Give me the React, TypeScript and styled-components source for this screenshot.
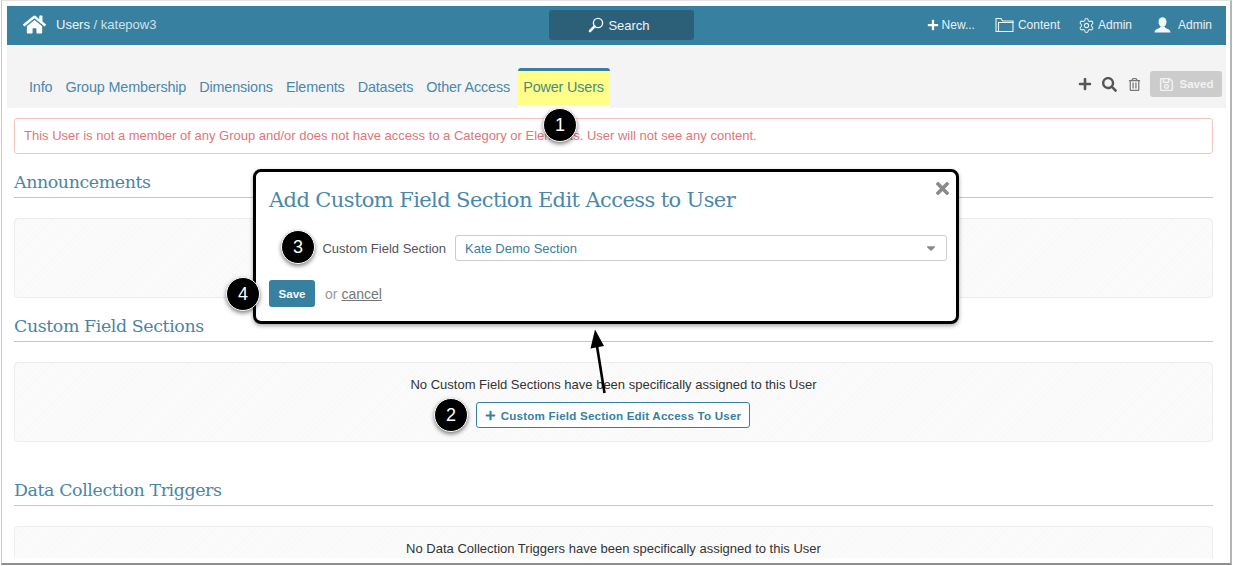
import React from "react";
import styled, { createGlobalStyle } from "styled-components";
import { FaPlus, FaSearch, FaRegSave, FaHome, FaTimes, FaRegTrashAlt, FaCaretDown } from "react-icons/fa";
import { Settings } from "lucide-react";

const Global = createGlobalStyle`
  html, body { margin: 0; padding: 0; background: #fff; }
  body { font-family: "Liberation Sans", Arial, sans-serif; }
  * { box-sizing: border-box; }
`;

const Stage = styled.div`
  position: relative;
  width: 1233px;
  height: 566px;
  overflow: hidden;
  background: #fff;
`;
const Frame = styled.div`
  width: 1231px;
  height: 565px;
  margin-left: 1px;
  border: 1px solid #c9c9c9;
  border-top-color: #e4e4e4;
  border-bottom: 2px solid #8f8f8f;
  border-right: 2px solid #b5b5b5;
  padding: 5px 4px 5px 5px;
  background: #fff;
`;
const Viewport = styled.div`
  height: 100%;
  overflow: hidden;
`;
const Header = styled.header`
  height: 39px;
  background: #37809f;
  display: grid;
  grid-template-columns: 542px 145px 1fr;
  align-items: center;
  color: #fff;
`;
const HeaderLeft = styled.div`
  display: flex;
  align-items: center;
  padding-left: 16px;
  gap: 10px;
  font-size: 13px;
  margin-top: -3px;
`;
const Crumb = styled.span`
  color: #f0f5f7;
  & > span { color: #cfe0e8; }
`;
const SearchBox = styled.div`
  height: 30px;
  margin-top: -1px;
  padding-right: 5px;
  background: #2c6078;
  border-radius: 3px;
  display: flex;
  align-items: center;
  justify-content: center;
  gap: 4px;
  font-size: 13px;
  color: #eef4f7;
`;
const HeaderRight = styled.nav`
  display: flex;
  justify-content: flex-end;
  align-items: center;
  font-size: 12px;
  color: #e8f0f4;
  padding-right: 14px;
  margin-top: -1px;
`;
const NavItem = styled.span<{ $gap: number; $ml: number }>`
  display: inline-flex;
  align-items: center;
  gap: ${(p) => p.$gap}px;
  margin-left: ${(p) => p.$ml}px;
`;
const SubBar = styled.div`
  height: 63px;
  background: #f4f4f4;
  display: flex;
  justify-content: space-between;
  align-items: flex-end;
  padding: 0 4px 0 15.5px;
`;
const Tabs = styled.div`
  display: flex;
  align-items: flex-end;
`;
const Tab = styled.span<{ $active?: boolean }>`
  height: 40px;
  display: flex;
  align-items: center;
  font-size: 14.4px;
  letter-spacing: -0.15px;
  padding: 0 6.5px 2px 6.5px;
  color: #4a88ad;
  ${(p) =>
    p.$active &&
    `
    width: 92px;
    margin-left: 1px;
    justify-content: center;
    color: #4a8a80;
    background: linear-gradient(#ffff88 0 34px, #fff 34px);
    border-top: 3px solid #37809f;
    border-radius: 3px 3px 0 0;
    padding: 0 0 5px;
  `}
`;
const Tools = styled.div`
  display: flex;
  align-items: center;
  height: 26px;
  margin-bottom: 11px;
  color: #555;
`;
const ToolSlot = styled.span<{ $w: number; $c?: string }>`
  width: ${(p) => p.$w}px;
  display: flex;
  justify-content: center;
  color: ${(p) => p.$c || "#555"};
`;
const SavedBtn = styled.span`
  width: 72px;
  height: 26px;
  margin-left: 3px;
  background: #ccc;
  border-radius: 3px;
  color: #f2f2f2;
  font-size: 11.5px;
  font-weight: 700;
  display: flex;
  align-items: center;
  justify-content: center;
  gap: 6px;
`;
const Content = styled.main`
  padding: 10px 13px 0 7px;
`;
const Alert = styled.div`
  height: 36px;
  border: 1px solid #f5c4c2;
  border-radius: 3px;
  color: #e0767a;
  font-size: 13px;
  display: flex;
  align-items: center;
  padding: 0 9px 1px;
`;
const Section = styled.section<{ $top: number }>`
  margin-top: ${(p) => p.$top}px;
`;
const SectionTitle = styled.h2`
  margin: 0;
  height: 28px;
  line-height: 24px;
  font-family: "DejaVu Serif", serif;
  font-weight: 400;
  font-size: 17.4px;
  letter-spacing: -0.4px;
  color: #4a85a5;
  border-bottom: 1px solid #b9cdd6;
`;
const Panel = styled.div`
  margin-top: 20px;
  height: 80px;
  border: 1px solid #ececec;
  border-radius: 4px;
  background: repeating-linear-gradient(135deg, #fbfbfb 0 2px, #f9f9f9 2px 4px);
  display: flex;
  flex-direction: column;
  align-items: center;
  padding-top: 14px;
  gap: 10px;
  font-size: 13px;
  line-height: 15px;
  color: #333;
`;
const AddBtn = styled.button`
  height: 26px;
  width: 274px;
  margin-right: 1px;
  border: 1px solid #37809f;
  border-radius: 3px;
  background: #fff;
  color: #37809f;
  font: 700 11.6px "Liberation Sans", Arial, sans-serif;
  letter-spacing: 0.2px;
  display: flex;
  align-items: center;
  justify-content: center;
  gap: 5px;
  padding: 0;
`;
const Modal = styled.div`
  position: absolute;
  left: 253px;
  top: 169px;
  width: 706px;
  height: 155px;
  background: #fff;
  border: 3px solid #000;
  border-radius: 8px;
  box-shadow: 0 2px 4px rgba(0, 0, 0, 0.35);
  padding: 0 9px 0 13px;
`;
const ModalTitle = styled.h3`
  margin: 0;
  padding-top: 14px;
  height: 63px;
  font-family: "DejaVu Serif", serif;
  font-weight: 400;
  font-size: 21px;
  line-height: 28px;
  letter-spacing: -0.6px;
  color: #4a88a8;
`;
const Close = styled.span`
  position: absolute;
  right: 4px;
  top: 7px;
  color: #8a8a8a;
  display: flex;
`;
const FieldRow = styled.div`
  display: grid;
  grid-template-columns: 177px 1fr;
  column-gap: 9px;
  align-items: center;
`;
const FieldLabel = styled.label`
  text-align: right;
  font-size: 13px;
  color: #555;
`;
const SelectBox = styled.div`
  height: 26px;
  border: 1px solid #ccc;
  border-radius: 3px;
  display: flex;
  align-items: center;
  justify-content: space-between;
  padding: 0 8px 0 9px;
  font-size: 13px;
  color: #37809f;
`;
const Actions = styled.div`
  display: flex;
  align-items: center;
  margin-top: 19px;
  font-size: 14px;
  color: #999;
`;
const SaveBtn = styled.button`
  width: 46px;
  height: 27px;
  border: 0;
  border-radius: 3px;
  background: #37809f;
  color: #f4f8fa;
  font: 700 11.6px "Liberation Sans", Arial, sans-serif;
  margin-right: 10px;
  padding: 0;
`;
const CancelLink = styled.a`
  margin-left: 4px;
  color: #777;
  text-decoration: underline;
`;
const Badge = styled.span<{ $x: number; $y: number }>`
  position: absolute;
  left: ${(p) => p.$x - 17}px;
  top: ${(p) => p.$y - 17}px;
  width: 34px;
  height: 34px;
  border-radius: 50%;
  background: #000;
  color: #fff;
  border: 1px solid #fff;
  box-shadow: 0 2px 4px rgba(0, 0, 0, 0.5);
  display: flex;
  align-items: center;
  justify-content: center;
  font-size: 18px;
`;
const ArrowSvg = styled.svg`
  position: absolute;
  left: 580px;
  top: 325px;
`;

const FolderIcon = () => (
  <svg width="19" height="16" viewBox="0 0 19 16" fill="none" stroke="#eef4f7" strokeWidth="1.1">
    <path d="M1 14.5V1.5h5l1.5 2.5h10.5v10.5z" />
    <path d="M3.5 14.5V5.5h15" />
  </svg>
);
const UserIcon = () => (
  <svg width="17" height="16" viewBox="0 0 17 16" fill="#f4f8fa">
    <ellipse cx="8.5" cy="5" rx="4" ry="4.8" />
    <path d="M0.5 15.5c0-3 3-3.6 5-4.6l1-1.4h4l1 1.4c2 1 5 1.6 5 4.6z" />
  </svg>
);
const ThinSearchIcon = () => (
  <svg width="16" height="16" viewBox="0 0 16 16" fill="none" stroke="#f4f8fa">
    <circle cx="10" cy="6" r="4.6" strokeWidth="1.4" />
    <path d="M6.6 9.4 L2 14" strokeWidth="2.6" strokeLinecap="round" />
  </svg>
);

export default function App() {
  return (
    <Stage>
      <Global />
      <Frame>
        <Viewport>
          <Header>
            <HeaderLeft>
              <FaHome size={23} color="#fff" />
              <Crumb>
                Users <span>/ katepow3</span>
              </Crumb>
            </HeaderLeft>
            <SearchBox>
              <ThinSearchIcon />
              Search
            </SearchBox>
            <HeaderRight>
              <NavItem $gap={3} $ml={0}>
                <FaPlus size={12} color="#fff" />
                New...
              </NavItem>
              <NavItem $gap={4} $ml={20}>
                <FolderIcon />
                Content
              </NavItem>
              <NavItem $gap={3} $ml={18}>
                <Settings size={17} strokeWidth={1.5} />
                Admin
              </NavItem>
              <NavItem $gap={7} $ml={22}>
                <UserIcon />
                Admin
              </NavItem>
            </HeaderRight>
          </Header>
          <SubBar>
            <Tabs>
              <Tab>Info</Tab>
              <Tab>Group Membership</Tab>
              <Tab>Dimensions</Tab>
              <Tab>Elements</Tab>
              <Tab>Datasets</Tab>
              <Tab>Other Access</Tab>
              <Tab $active>Power Users</Tab>
            </Tabs>
            <Tools>
              <ToolSlot $w={24}>
                <FaPlus size={14} />
              </ToolSlot>
              <ToolSlot $w={24}>
                <FaSearch size={15} />
              </ToolSlot>
              <ToolSlot $w={26} $c="#777">
                <FaRegTrashAlt size={13} />
              </ToolSlot>
              <SavedBtn>
                <FaRegSave size={15} />
                Saved
              </SavedBtn>
            </Tools>
          </SubBar>
          <Content>
            <Alert>
              This User is not a member of any Group and/or does not have access to a Category or Elements. User will not see any content.
            </Alert>
            <Section $top={16}>
              <SectionTitle>Announcements</SectionTitle>
              <Panel />
            </Section>
            <Section $top={16}>
              <SectionTitle>Custom Field Sections</SectionTitle>
              <Panel>
                No Custom Field Sections have been specifically assigned to this User
                <AddBtn>
                  <FaPlus size={11} />
                  Custom Field Section Edit Access To User
                </AddBtn>
              </Panel>
            </Section>
            <Section $top={36}>
              <SectionTitle>Data Collection Triggers</SectionTitle>
              <Panel>No Data Collection Triggers have been specifically assigned to this User</Panel>
            </Section>
          </Content>
        </Viewport>
      </Frame>
      <Modal>
        <ModalTitle>Add Custom Field Section Edit Access to User</ModalTitle>
        <Close>
          <FaTimes size={19} />
        </Close>
        <FieldRow>
          <FieldLabel>Custom Field Section</FieldLabel>
          <SelectBox>
            Kate Demo Section
            <FaCaretDown size={14} color="#8a8a8a" />
          </SelectBox>
        </FieldRow>
        <Actions>
          <SaveBtn>Save</SaveBtn>
          or <CancelLink>cancel</CancelLink>
        </Actions>
      </Modal>
      <ArrowSvg width="40" height="75" viewBox="0 0 40 75">
        <path d="M24.5 68 L16.5 18" stroke="#000" strokeWidth="2.6" fill="none" />
        <path d="M15 4.5 L10.5 23.5 L24 21 Z" fill="#000" />
      </ArrowSvg>
      <Badge $x={560} $y={125}>1</Badge>
      <Badge $x={451} $y={415}>2</Badge>
      <Badge $x={298} $y={247}>3</Badge>
      <Badge $x={243} $y={294}>4</Badge>
    </Stage>
  );
}
